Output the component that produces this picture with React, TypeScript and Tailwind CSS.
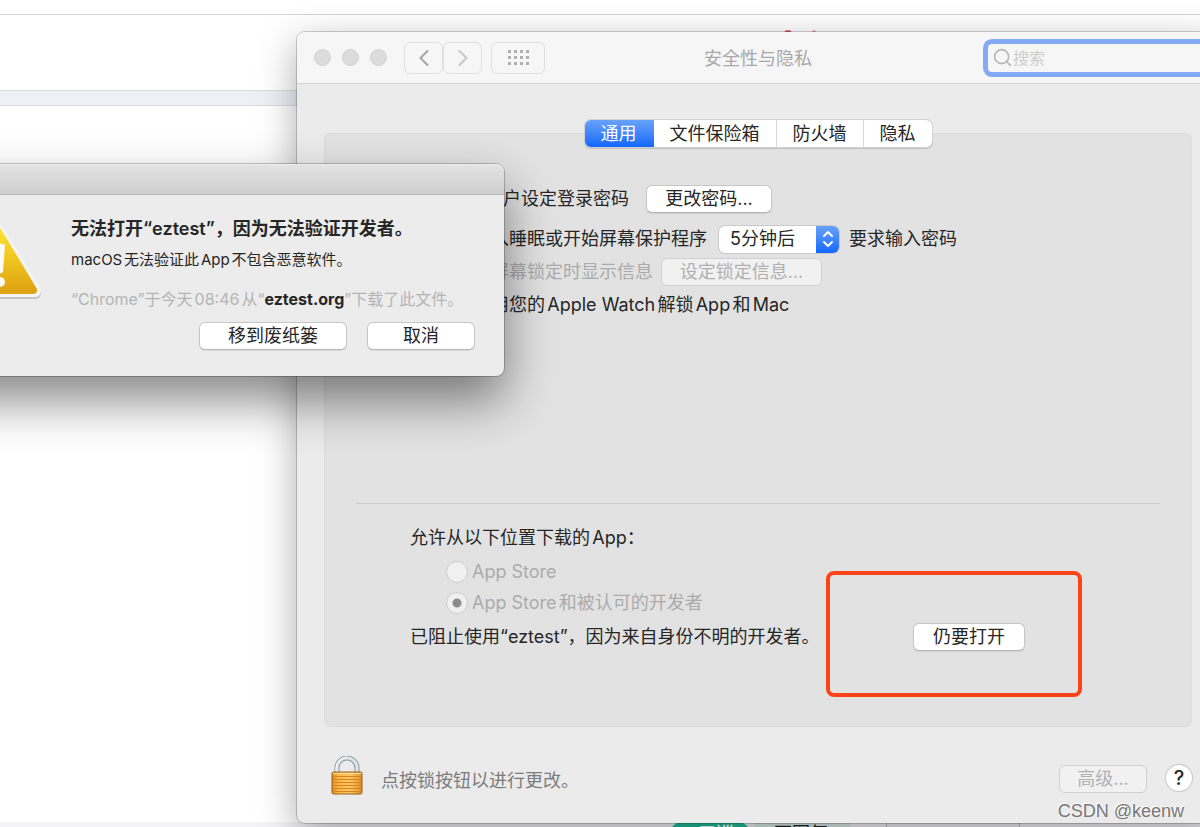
import { useState } from 'react';
import type { ReactNode } from 'react';
import { ChevronLeft, ChevronRight, Search } from 'lucide-react';
import clsx from 'clsx';

const TABS = ['通用', '文件保险箱', '防火墙', '隐私'];

const SOURCES = [
  { id: 'store', label: 'App Store' },
  { id: 'identified', label: 'App Store和被认可的开发者' },
];

interface PushButtonProps {
  children: ReactNode;
  className?: string;
  disabled?: boolean;
}

function PushButton({ children, className, disabled }: PushButtonProps) {
  return (
    <button disabled={disabled}
      className={clsx(
        'h-7 shrink-0 rounded-md border text-lg leading-6 whitespace-nowrap [text-autospace:no-autospace]',
        disabled
          ? 'border-[#d0d0d0] bg-[#f1f1f1] text-[#b0b0b0]'
          : 'border-[#c6c6c6] border-b-[#b4b4b4] bg-white text-[#262626] shadow-[0_1px_1px_rgba(0,0,0,0.08)]',
        className,
      )}>
      {children}
    </button>
  );
}

function WarningIcon() {
  return (
    <svg viewBox="0 0 88 76" className="w-[88px] h-[76px] shrink-0" aria-hidden="true">
      <defs>
        <linearGradient id="warn" x1="0" y1="0" x2="0" y2="1">
          <stop offset="0" stopColor="#fbe032" />
          <stop offset="0.5" stopColor="#efc31f" />
          <stop offset="1" stopColor="#dfa313" />
        </linearGradient>
      </defs>
      <path d="M44 7 L81 68 L7 68 Z" fill="#c4c4c4" stroke="#c4c4c4" strokeWidth="12" strokeLinejoin="round" />
      <path d="M44 6 L81 66 L7 66 Z" fill="#f4f4f2" stroke="#f4f4f2" strokeWidth="12" strokeLinejoin="round" />
      <path d="M44 7 L79 65 L9 65 Z" fill="url(#warn)" stroke="url(#warn)" strokeWidth="8" strokeLinejoin="round" />
      <path d="M40 20 Q45 17 51 20 L49 47 Q45 50 42 47 Z" fill="#fbfaf3" />
      <circle cx="46" cy="57" r="5" fill="#fbfaf3" />
    </svg>
  );
}

function LockIcon() {
  return (
    <svg viewBox="0 0 32 39" className="w-8 h-[39px] shrink-0" aria-hidden="true">
      <defs>
        <linearGradient id="brass" x1="0" y1="0" x2="1" y2="0">
          <stop offset="0" stopColor="#d98a26" />
          <stop offset="0.2" stopColor="#f9b547" />
          <stop offset="0.6" stopColor="#fdc763" />
          <stop offset="1" stopColor="#dc8f2b" />
        </linearGradient>
      </defs>
      <path d="M6 17 V12 a10 10 0 0 1 20 0 V17" fill="none" stroke="#8d969d" strokeWidth="5" />
      <path d="M6 17 V12 a10 10 0 0 1 20 0 V17" fill="none" stroke="#dfe6ea" strokeWidth="3" />
      <path d="M5 17 V12 a11 11 0 0 1 11 -11" fill="none" stroke="#f8fafb" strokeWidth="1" />
      <rect x="1" y="16" width="30" height="22" rx="1.5" fill="url(#brass)" stroke="#9c5f1c" />
      <path d="M2 17.5 H30" stroke="#fbe09a" />
      <path d="M2 20.5 H30 M2 23.5 H30 M2 26.5 H30 M2 29.5 H30 M2 32.5 H30 M2 35.5 H30" stroke="#d98522" strokeWidth="1" />
    </svg>
  );
}

function Backdrop() {
  return (
    <div className="min-h-screen flex flex-col bg-white">
      <div className="h-[15px] border-b border-[#d3d3d3]" />
      <div className="h-[75px] pt-[15px] flex gap-5 pl-[784px]">
        <span className="w-2 h-3 rounded-full bg-[#e0607a]" />
        <span className="w-1 h-3 rounded-full bg-[#f0b0bb]" />
      </div>
      <div className="h-4 border-y border-[#dcdde2] bg-[#eef0f6]" />
      <div className="flex-1" />
      <div className="h-[5px] overflow-hidden flex items-start bg-[#f4f4f6] pl-[670px] text-lg leading-6">
        <span className="h-6 w-20 shrink-0 rounded-full bg-[#1fbf9c] pl-7 font-medium text-white">三巡讨</span>
        <span className="ml-1 h-6 w-24 shrink-0 bg-[#dcefe9] pl-5 text-[#222222]">不图气</span>
        <span className="ml-9 h-6 w-[134px] shrink-0 border-x border-[#c0c0c4] bg-[#eeeff6]" />
      </div>
    </div>
  );
}

function Toolbar() {
  return (
    <header className="h-[52px] grid grid-cols-3 items-center rounded-t-lg border-b border-[#d2d2d2] bg-[#f6f6f6]">
      <div className="flex items-center pl-[17px]">
        <div className="flex gap-[11px] mr-[17px]">
          {['关闭', '最小化', '缩放'].map((name) => (
            <button key={name} aria-label={name} className="size-[17px] rounded-full border border-[#d2d2d2] bg-[#dcdcdc]" />
          ))}
        </div>
        <button aria-label="后退"
          className="w-[39px] h-8 flex items-center justify-center rounded-md border border-[#dfdfdf] text-[#a6a6a6]">
          <ChevronLeft className="size-7" strokeWidth={1.75} />
        </button>
        <button aria-label="前进"
          className="w-[39px] h-8 flex items-center justify-center rounded-md border border-[#dfdfdf] text-[#c8c8c8]">
          <ChevronRight className="size-7" strokeWidth={1.75} />
        </button>
        <button aria-label="全部显示"
          className="ml-[9px] w-[54px] h-8 flex items-center justify-center rounded-md border border-[#dfdfdf]">
          <span className="grid grid-cols-4 gap-x-[3px] gap-y-[3px]">
            {Array.from({ length: 12 }, (_, i) => (
              <span key={i} className="size-[3px] bg-[#b0b0b0]" />
            ))}
          </span>
        </button>
      </div>
      <h1 className="pt-[3px] text-center text-lg leading-6 text-[#a8a8a8]">安全性与隐私</h1>
      <label className="ml-auto mr-[5px] w-[226px] h-7 flex items-center rounded-sm bg-[#f6f6f6] pl-1 shadow-[0_0_0_5px_#83aaf4]">
        <Search className="size-[21px] shrink-0 text-[#b4b4b4]" strokeWidth={1.75} />
        <input type="search" aria-label="搜索" placeholder="搜索"
          className="w-full bg-transparent text-base leading-6 outline-none placeholder:text-[#cdcdcd]" />
      </label>
    </header>
  );
}

function Preferences() {
  const [tab, setTab] = useState('通用');
  const [delay, setDelay] = useState('5分钟后');

  return (
    <section
      className="absolute left-[297px] top-8 -right-[19px] rounded-lg bg-[#ebebeb] shadow-[0_0_0_1px_rgba(0,0,0,0.18),0_12px_38px_rgba(0,0,0,0.34)]">
      <Toolbar />

      <div className="px-[27px] pt-9">
        <div role="tablist" className="relative z-10 mx-auto -mb-3.5 flex h-[27px] w-fit rounded-md bg-white shadow-[0_0_0_1px_#d2d2d2,0_1px_0_1px_#c0c0c0]">
          {TABS.map((t) => (
            <button key={t} role="tab" aria-selected={tab === t} onClick={() => setTab(t)}
              className={clsx(
                'px-4 text-lg leading-6 first:rounded-l-md last:rounded-r-md border-r border-[#dadada] last:border-r-0',
                tab === t ? 'bg-linear-to-b from-[#67a1fa] to-[#1067fb] text-white border-transparent' : 'text-[#262626]',
              )}>
              {t}
            </button>
          ))}
        </div>

        {/* General pane */}
        <div className="h-[594px] rounded-md border border-[#dddddd] bg-[#e2e2e2] px-[31px] pt-[51px]">
          <div className="pl-[57px]">
            <div className="flex h-7 items-center">
              <span>已经为此用户设定登录密码</span>
              <PushButton className="ml-[17px] w-[126px]">更改密码...</PushButton>
            </div>

            <div className="mt-3 ml-9 flex h-7 items-center">
              <input id="require" type="checkbox" defaultChecked className="mr-2 size-4" />
              <label htmlFor="require">进入睡眠或开始屏幕保护程序</label>
              <div className="relative ml-3 mr-[10px] h-[27px] w-[120px] overflow-hidden rounded-md bg-white shadow-[0_0_0_1px_#cacaca]">
                <select aria-label="要求输入密码" value={delay} onChange={(e) => setDelay(e.target.value)}
                  className="size-full appearance-none pl-[11px] text-lg leading-6 outline-none [text-autospace:normal]">
                  <option>立即</option>
                  <option>5分钟后</option>
                  <option>15分钟后</option>
                </select>
                <span className="pointer-events-none absolute inset-y-0 right-0 flex w-[23px] items-center justify-center bg-linear-to-b from-[#67a1fa] to-[#1067fb]">
                  <svg viewBox="0 0 12 18" className="w-3 h-[18px]" fill="none" stroke="white" strokeWidth="2" strokeLinecap="round" strokeLinejoin="round">
                    <path d="M2 6 L6 2 L10 6 M2 12 L6 16 L10 12" />
                  </svg>
                </span>
              </div>
              <span>要求输入密码</span>
            </div>

            <div className="mt-[5px] ml-9 flex h-7 items-center text-[#ababab]">
              <input id="message" type="checkbox" disabled className="mr-2 size-4" />
              <label htmlFor="message">在屏幕锁定时显示信息</label>
              <PushButton disabled className="ml-2 w-[161px]">设定锁定信息...</PushButton>
            </div>

            <div className="mt-[5px] ml-9 flex h-7 items-center">
              <input id="watch" type="checkbox" className="mr-2 size-4" />
              <label htmlFor="watch">使用您的Apple Watch解锁App和Mac</label>
            </div>
          </div>

          <hr className="mt-[184px] border-[#cccccc]" />

          <fieldset className="mt-[22px] pl-[54px]">
            <legend className="leading-6">允许从以下位置下载的App：</legend>
            <div className="mt-2 flex flex-col gap-[3px] pl-9 text-[#ababab]">
              {SOURCES.map((s) => (
                <label key={s.id} className="flex h-7 items-center gap-1">
                  <input type="radio" name="source" disabled defaultChecked={s.id === 'identified'}
                    className="size-[22px] appearance-none rounded-full border border-[#cdcdcd] bg-[#f0f0f0] checked:bg-[radial-gradient(circle,#8c8c8c_4px,#f0f0f0_5px)]" />
                  {s.label}
                </label>
              ))}
            </div>
          </fieldset>

          <div className="mt-[6px] flex h-7 items-center justify-between pl-[54px] pr-[135px]">
            <span>已阻止使用“eztest”，因为来自身份不明的开发者。</span>
            <PushButton className="w-[112px]">仍要打开</PushButton>
          </div>
        </div>
      </div>

      <footer className="flex h-24 items-center px-[27px] pb-1">
        <div className="flex flex-1 items-center gap-[18px] pl-[7px] pt-[5px] text-[#7c7c7c]">
          <LockIcon />
          <span className="pt-[11px]">点按锁按钮以进行更改。</span>
        </div>
        <PushButton disabled className="mt-3 w-[88px]">高级...</PushButton>
        <button aria-label="帮助"
          className="mt-[10px] ml-[19px] size-[26px] rounded-full bg-white text-xl leading-6 font-medium text-[#262626] shadow-[0_0_1px_1px_rgba(0,0,0,0.16)]">
          ?
        </button>
      </footer>

      {/* Highlight around the open button */}
      <div className="pointer-events-none absolute top-[539px] right-[137px] h-[126px] w-64 rounded-lg border-4 border-[#fb4318]" />
    </section>
  );
}

function OpenAlert() {
  return (
    <section role="alertdialog" aria-labelledby="alert-title"
      className="absolute -left-20 top-[164px] w-[584px] rounded-lg bg-[#ececec] shadow-[0_0_0_1px_rgba(0,0,0,0.22),0_24px_50px_rgba(0,0,0,0.48)]">
      <div className="h-[31px] rounded-t-lg border-t border-b border-t-[#eeeeee] border-b-[#b8b8b8] bg-linear-to-b from-[#e3e3e3] to-[#cecece]" />
      <div className="flex gap-[29px] pt-[22px] pr-7 pl-[34px]">
        <div className="pt-2">
          <WarningIcon />
        </div>
        <div className="flex-1 whitespace-nowrap">
          <h2 id="alert-title" className="text-lg leading-6 font-semibold text-[#262626]">
            无法打开“eztest”，因为无法验证开发者。
          </h2>
          <p className="mt-[7px] text-[15px] leading-6">macOS无法验证此App不包含恶意软件。</p>
          <p className="mt-[15px] text-base leading-6 text-[#b4b4b4]">
            “Chrome”于今天08:46从“<b className="font-bold text-[#262626]">eztest.org</b>”下载了此文件。
          </p>
        </div>
      </div>
      <div className="flex justify-end gap-5 pt-[11px] pr-[29px] pb-[26px]">
        <PushButton className="w-[148px]">移到废纸篓</PushButton>
        <PushButton className="w-[108px]">取消</PushButton>
      </div>
    </section>
  );
}

export default function App() {
  return (
    <div className="relative overflow-hidden text-lg leading-6 text-[#262626] font-[Inter,'Noto_Sans_CJK_SC',sans-serif] [text-autospace:normal]" lang="zh-CN">
      <Backdrop />
      <Preferences />
      <OpenAlert />
      <span className="absolute right-4 bottom-1 font-['Liberation_Sans',sans-serif] text-lg leading-6 text-[#777777] [text-shadow:-1px_-1px_0_#ffffff]">
        CSDN @keenw
      </span>
    </div>
  );
}
